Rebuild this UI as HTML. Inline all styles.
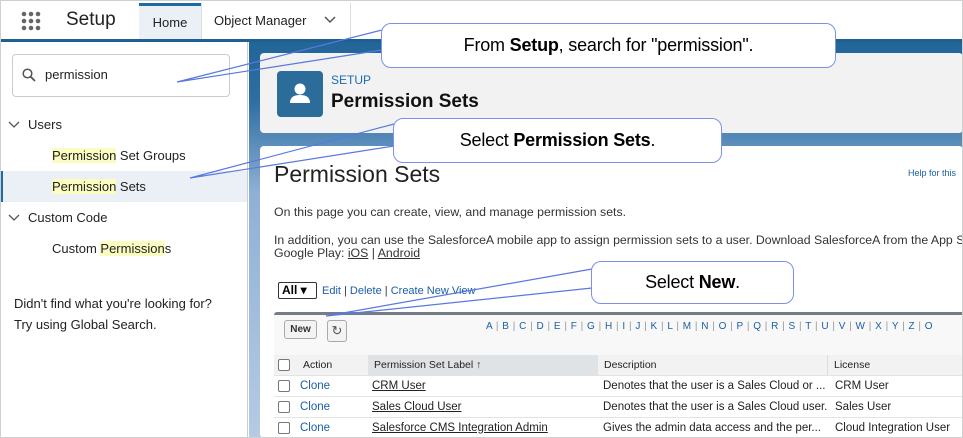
<!DOCTYPE html>
<html><head><meta charset="utf-8"><style>
*{margin:0;padding:0;box-sizing:border-box}
body{width:963px;height:438px;overflow:hidden;background:#fff;font-family:"Liberation Sans",sans-serif;position:relative}
.a{position:absolute}
.lk{color:#1b5fa5}
.co{position:absolute;background:#fff;border:1px solid #7a92e8;border-radius:10px;font-size:18px;color:#000;text-align:center;letter-spacing:-0.2px}
.hl{background:#fbfcc0}
.row{position:absolute;left:274px;width:689px;height:21px;border-top:1px solid #e3e3e3;font-size:11.5px;color:#222;line-height:20px}
.cb{position:absolute;left:4px;top:4px;width:12px;height:12px;border:1px solid #777;border-radius:2px;background:#fff}
</style></head><body>
<div class="a" style="left:0;top:0;width:963px;height:438px;border:1px solid #d0d0d0;z-index:9;pointer-events:none"></div>
<div class="a" style="left:0;top:0;width:963px;height:39px;background:#fff"></div>
<svg class="a" style="left:21px;top:11px" width="22" height="22"><g fill="#666"><circle cx="3" cy="3" r="2.3"/><circle cx="10" cy="3" r="2.3"/><circle cx="17" cy="3" r="2.3"/><circle cx="3" cy="10" r="2.3"/><circle cx="10" cy="10" r="2.3"/><circle cx="17" cy="10" r="2.3"/><circle cx="3" cy="17" r="2.3"/><circle cx="10" cy="17" r="2.3"/><circle cx="17" cy="17" r="2.3"/></g></svg>
<div class="a" style="left:66px;top:9px;font-size:19px;color:#222">Setup</div>
<div class="a" style="left:139px;top:3px;width:62px;height:36px;background:#eaf0f5;border-top:3px solid #1f6aa0;font-size:13px;color:#222;text-align:center;line-height:33px">Home</div>
<div class="a" style="left:201px;top:3px;width:150px;height:36px;border-left:1px solid #ddd;border-right:1px solid #ddd;font-size:13px;color:#222;line-height:36px;padding-left:12px">Object Manager</div>
<svg class="a" style="left:324px;top:16px" width="12" height="8"><path d="M1 1L6 6L11 1" stroke="#555" stroke-width="1.5" fill="none"/></svg>
<div class="a" style="left:0;top:39px;width:963px;height:3px;background:#1e5f90"></div>
<div class="a" style="left:0;top:42px;width:248px;height:396px;background:#fff;border-right:1px solid #ccc"></div>
<div class="a" style="left:12px;top:54px;width:218px;height:43px;border:1px solid #ccc;border-radius:4px"></div>
<svg class="a" style="left:22px;top:68px" width="14" height="14"><circle cx="5.5" cy="5.5" r="4.3" stroke="#555" stroke-width="1.5" fill="none"/><path d="M8.7 8.7L13 13" stroke="#555" stroke-width="1.8"/></svg>
<div class="a" style="left:45px;top:67px;font-size:13px;color:#222">permission</div>
<svg class="a" style="left:8px;top:121px" width="12" height="8"><path d="M1 1L6 6L11 1" stroke="#555" stroke-width="1.3" fill="none"/></svg>
<div class="a" style="left:28px;top:117px;font-size:13px;color:#222">Users</div>
<div class="a" style="left:52px;top:148px;font-size:13px;color:#222"><span class="hl">Permission</span> Set Groups</div>
<div class="a" style="left:1px;top:171px;width:246px;height:31px;background:#eaf0f5;border-left:2px solid #1f6aa0"></div>
<div class="a" style="left:52px;top:179px;font-size:13px;color:#222"><span class="hl">Permission</span> Sets</div>
<svg class="a" style="left:8px;top:214px" width="12" height="8"><path d="M1 1L6 6L11 1" stroke="#555" stroke-width="1.3" fill="none"/></svg>
<div class="a" style="left:28px;top:210px;font-size:13px;color:#222">Custom Code</div>
<div class="a" style="left:52px;top:241px;font-size:13px;color:#222">Custom <span class="hl">Permission</span>s</div>
<div class="a" style="left:14px;top:293px;font-size:13px;color:#222;line-height:21px">Didn't find what you're looking for?<br>Try using Global Search.</div>
<div class="a" style="left:249px;top:42px;width:714px;height:396px;background:linear-gradient(#226598 0px,#2e6fa3 60px,#8fb0d4 150px,#b5cbe3 396px)"></div>
<div class="a" style="left:260px;top:53px;width:703px;height:80px;background:#f2f2f2;border-radius:4px"></div>
<div class="a" style="left:277px;top:71px;width:46px;height:46px;background:#2b6c9b;border-radius:4px"></div>
<svg class="a" style="left:287px;top:81px" width="26" height="26"><circle cx="13" cy="8" r="5.5" fill="#fff"/><path d="M3 22c0-6 4-8 10-8s10 2 10 8z" fill="#fff"/></svg>
<div class="a" style="left:331px;top:73px;font-size:12px;color:#1b6bb5">SETUP</div>
<div class="a" style="left:331px;top:91px;font-size:19px;font-weight:bold;color:#111">Permission Sets</div>
<div class="a" style="left:260px;top:146px;width:703px;height:292px;background:#fff;border-radius:4px"></div>
<div class="a" style="left:274px;top:161px;font-size:23px;color:#222">Permission Sets</div>
<div class="a lk" style="left:908px;top:168px;font-size:9px">Help for this</div>
<div class="a" style="left:274px;top:205px;font-size:12.3px;color:#333">On this page you can create, view, and manage permission sets.</div>
<div class="a" style="left:274px;top:234px;font-size:12.3px;color:#333;line-height:13px;white-space:nowrap">In addition, you can use the SalesforceA mobile app to assign permission sets to a user. Download SalesforceA from the App S<br>Google Play: <u>iOS</u> | <u>Android</u></div>
<div class="a" style="left:278px;top:282px;width:39px;height:17px;border:1px solid #333;border-radius:2px;font-size:12px;font-weight:bold;line-height:15px;padding-left:3px">All ▾</div>
<div class="a lk" style="left:322px;top:285px;font-size:11px">Edit <span style="color:#333">|</span> Delete <span style="color:#333">|</span> Create New View</div>
<div class="a" style="left:274px;top:312px;width:689px;height:3px;background:#767c85;border-radius:3px 0 0 0"></div>
<div class="a" style="left:274px;top:315px;width:689px;height:40px;background:#f8f8f8"></div>
<div class="a" style="left:284px;top:320px;width:33px;height:19px;border:1px solid #aaa;border-radius:3px;background:#f3f3f3;font-size:10px;font-weight:bold;text-align:center;line-height:17px;color:#333">New</div>
<div class="a" style="left:327px;top:320px;width:20px;height:22px;border:1px solid #aaa;border-radius:3px;background:#f3f3f3;font-size:13px;text-align:center;color:#555;line-height:20px">↻</div>
<div class="a lk" style="left:486px;top:321px;font-size:10px;word-spacing:1px;white-space:nowrap">A <span style="color:#999">|</span> B <span style="color:#999">|</span> C <span style="color:#999">|</span> D <span style="color:#999">|</span> E <span style="color:#999">|</span> F <span style="color:#999">|</span> G <span style="color:#999">|</span> H <span style="color:#999">|</span> I <span style="color:#999">|</span> J <span style="color:#999">|</span> K <span style="color:#999">|</span> L <span style="color:#999">|</span> M <span style="color:#999">|</span> N <span style="color:#999">|</span> O <span style="color:#999">|</span> P <span style="color:#999">|</span> Q <span style="color:#999">|</span> R <span style="color:#999">|</span> S <span style="color:#999">|</span> T <span style="color:#999">|</span> U <span style="color:#999">|</span> V <span style="color:#999">|</span> W <span style="color:#999">|</span> X <span style="color:#999">|</span> Y <span style="color:#999">|</span> Z <span style="color:#999">|</span> O</div>
<div class="row" style="top:355px;background:#f2f2f2;font-size:10.5px;border-top:none"><div class="cb"></div><span class="a" style="left:29px">Action</span><div class="a" style="left:94px;top:0;width:230px;height:20px;background:#e0e3e6;padding-left:6px">Permission Set Label ↑</div><span class="a" style="left:330px">Description</span><div class="a" style="left:553px;top:0;width:1px;height:20px;background:#ddd"></div><span class="a" style="left:560px">License</span></div>
<div class="row" style="top:375px"><div class="cb"></div><span class="a lk" style="left:26px">Clone</span><u class="a" style="left:98px">CRM User</u><span class="a" style="left:329px">Denotes that the user is a Sales Cloud or ...</span><span class="a" style="left:561px">CRM User</span></div>
<div class="row" style="top:396px"><div class="cb"></div><span class="a lk" style="left:26px">Clone</span><u class="a" style="left:98px">Sales Cloud User</u><span class="a" style="left:329px">Denotes that the user is a Sales Cloud user.</span><span class="a" style="left:561px">Sales User</span></div>
<div class="row" style="top:417px"><div class="cb"></div><span class="a lk" style="left:26px">Clone</span><u class="a" style="left:98px">Salesforce CMS Integration Admin</u><span class="a" style="left:329px">Gives the admin data access and the per...</span><span class="a" style="left:561px">Cloud Integration User</span></div>
<svg class="a" style="left:0;top:0;z-index:5" width="963" height="438"><g stroke="#5a78e0" stroke-width="1.2" fill="none">
<path d="M382 30L177 82L382 50"/>
<path d="M394 124L190 178L394 146"/>
<path d="M592 269L326 316L592 288"/>
</g></svg>
<div class="co" style="left:381px;top:23px;width:455px;height:45px;line-height:43px;z-index:6">From <b>Setup</b>, search for "permission".</div>
<div class="co" style="left:393px;top:118px;width:329px;height:45px;line-height:43px;z-index:6">Select <b>Permission Sets</b>.</div>
<div class="co" style="left:591px;top:261px;width:203px;height:43px;line-height:41px;z-index:6">Select <b>New</b>.</div>
</body></html>
